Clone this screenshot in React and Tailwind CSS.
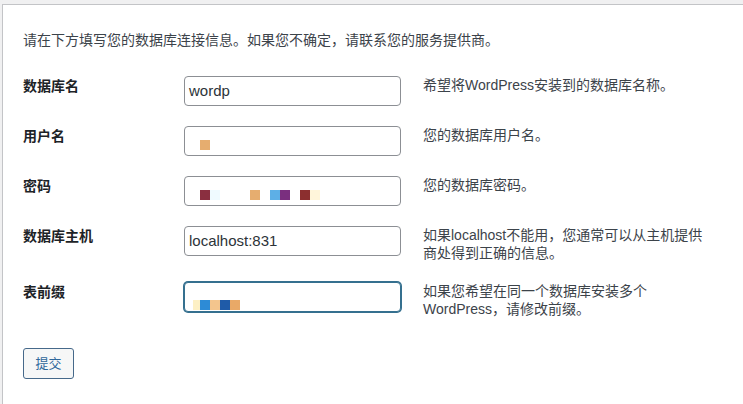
const font = { fontFamily: '"Liberation Sans", "Noto Sans CJK SC", sans-serif' }

const rows = [
  { label: '数据库名', value: 'wordp', desc: '希望将WordPress安装到的数据库名称。' },
  {
    label: '用户名',
    desc: '您的数据库用户名。',
    blocks: [{ left: 15, top: 13, w: 10, color: 'bg-[#e6ad6f]' }],
  },
  {
    label: '密码',
    desc: '您的数据库密码。',
    blocks: [
      { left: 15, top: 13, w: 10, color: 'bg-[#8a2f40]' },
      { left: 25, top: 13, w: 10, color: 'bg-[#effaff]' },
      { left: 65, top: 13, w: 10, color: 'bg-[#e6ad6f]' },
      { left: 85, top: 13, w: 10, color: 'bg-[#5dafe6]' },
      { left: 95, top: 13, w: 10, color: 'bg-[#7a2f7f]' },
      { left: 115, top: 13, w: 10, color: 'bg-[#8c2f2f]' },
      { left: 125, top: 13, w: 10, color: 'bg-[#fff5da]' },
    ],
  },
  {
    label: '数据库主机',
    value: 'localhost:831',
    desc: '如果localhost不能用，您通常可以从主机提供商处得到正确的信息。',
  },
  {
    label: '表前缀',
    focused: true,
    desc: '如果您希望在同一个数据库安装多个WordPress，请修改前缀。',
    blocks: [
      { left: 8, top: 17, w: 7, color: 'bg-[#fdf0c4]' },
      { left: 15, top: 17, w: 10, color: 'bg-[#2d8bd6]' },
      { left: 25, top: 17, w: 10, color: 'bg-[#f3c58d]' },
      { left: 35, top: 17, w: 10, color: 'bg-[#1f5ba8]' },
      { left: 45, top: 17, w: 10, color: 'bg-[#e9a967]' },
    ],
  },
]

function Field({ value, blocks = [], focused }) {
  return (
    <div
      className={
        'relative w-[217px] h-[30px] shrink-0 rounded-[4px] bg-white flex items-center px-[4px] text-[15px] text-[#2c3338] ' +
        (focused ? 'border border-[#35708f] ring-1 ring-[#35708f]' : 'border border-[#8c8f94]')
      }
    >
      {value}
      {blocks.map((b, i) => (
        <span
          key={i}
          className={'absolute h-[10px] ' + b.color}
          style={{ left: b.left, top: b.top, width: b.w }}
        />
      ))}
    </div>
  )
}

export default function App() {
  return (
    <div className="h-[404px] w-[743px] overflow-hidden bg-[#f0f0f1] pt-[4px] pl-[2px]" style={font}>
      <div className="w-[780px] h-[420px] bg-white border-l border-t border-[#c3c4c7] pl-[20px] pt-[25px]">
        <p className="text-[14px] leading-[20px] text-[#3c434a]">
          请在下方填写您的数据库连接信息。如果您不确定，请联系您的服务提供商。
        </p>

        <div className="mt-[26px] flex flex-col gap-5">
          {rows.map((r) => (
            <div key={r.label} className="flex items-start">
              <div className="w-[161px] shrink-0 text-[14px] leading-[20px] font-bold text-[#1d2327]">
                {r.label}
              </div>
              <Field value={r.value} blocks={r.blocks} focused={r.focused} />
              <div className="ml-[22px] w-[286px] text-[14px] leading-[18px] text-[#3c434a]">{r.desc}</div>
            </div>
          ))}
        </div>

        <button className="mt-[30px] w-[51px] h-[31px] flex items-center justify-center rounded-[3px] border border-[#46698a] bg-[#f6f7f7] text-[13px] text-[#2f679b]">
          提交
        </button>
      </div>
    </div>
  )
}
